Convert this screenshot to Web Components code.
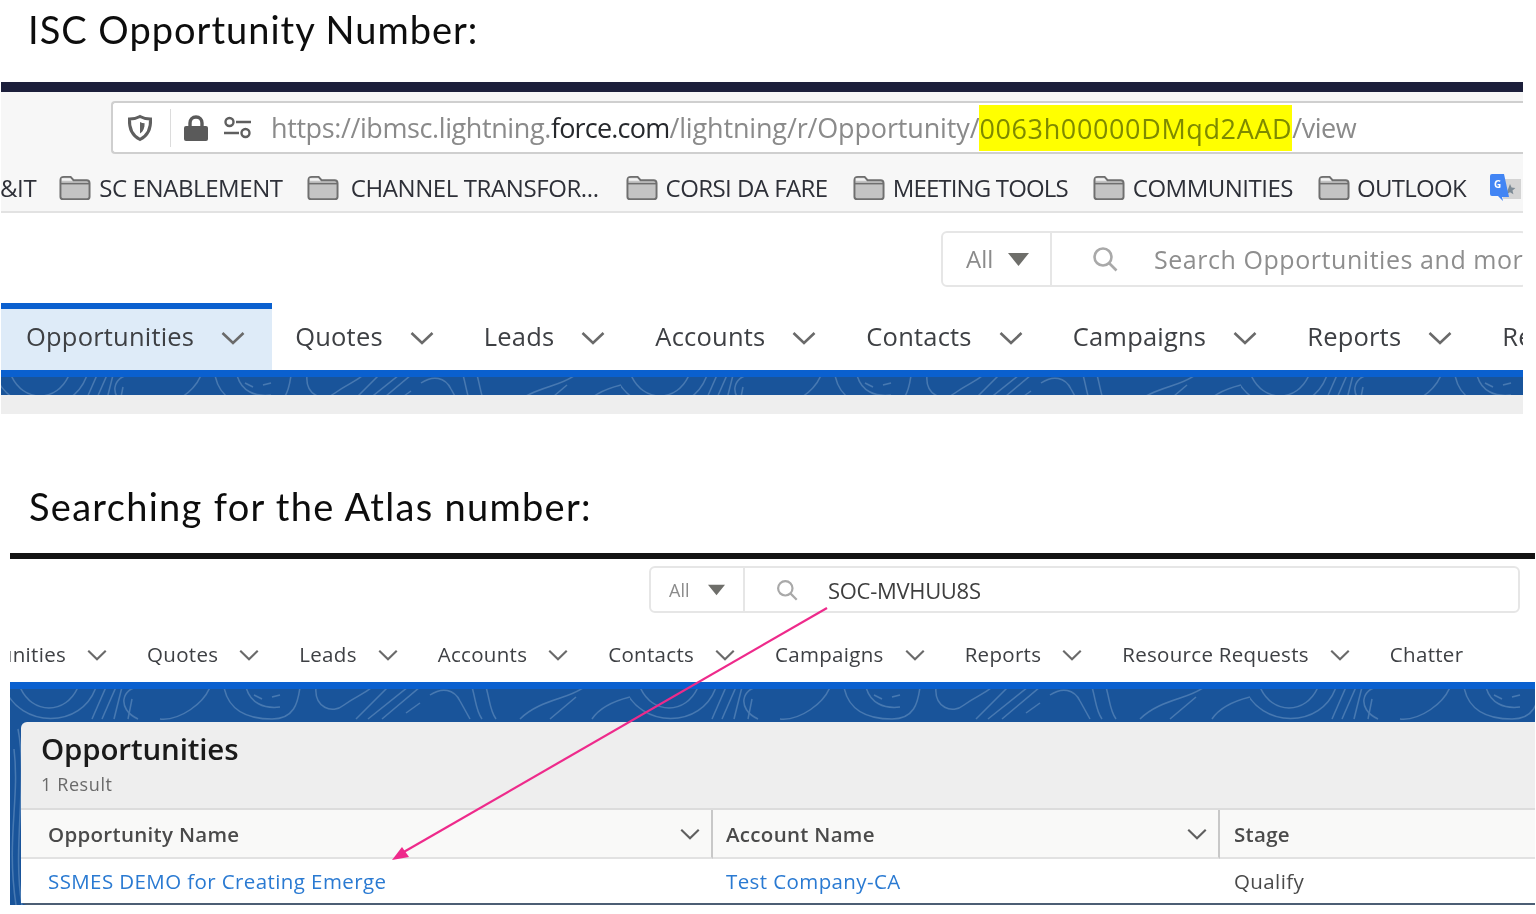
<!DOCTYPE html>
<html>
<head>
<meta charset="utf-8">
<title>ISC Opportunity Number</title>
<style>
    html, body { margin: 0; padding: 0; background: #fff; }
    body { position: relative; width: 1536px; height: 914px; overflow: hidden; font-family: "Open Sans", sans-serif; }
</style>
</head>
<body>

<slide-caption height="82" text-y="9" left="28" spacing="1">ISC Opportunity Number:</slide-caption>

<page-shot left="1" right="13">
    <browser-chrome><url-part spacing="-.4">https://ibmsc.lightning.</url-part><url-part strong spacing="-.8">force.com</url-part>/lightning/r/Opportunity/<url-part mark spacing=".63">0063h00000DMqd2AAD</url-part><url-part spacing="-.5">/view</url-part></browser-chrome>
    <search-row left="940" top="18" bottom="16" height="56" scope-width="109" size="25">Search Opportunities and mor</search-row>
    <nav-bar size="25.5" gap="27" chevron="24" space="50">
        <nav-tab active>Opportunities</nav-tab>
        <nav-tab>Quotes</nav-tab>
        <nav-tab>Leads</nav-tab>
        <nav-tab>Accounts</nav-tab>
        <nav-tab>Contacts</nav-tab>
        <nav-tab>Campaigns</nav-tab>
        <nav-tab>Reports</nav-tab>
        <nav-tab plain>Re</nav-tab>
    </nav-bar>
    <topo-band height="25"></topo-band>
    <grey-strip></grey-strip>
</page-shot>

<slide-caption height="139" text-y="72" left="29" spacing="1.3">Searching for the Atlas number:</slide-caption>

<page-shot left="10" right="1" rule>
    <search-row left="639" top="7" bottom="7" height="47" scope-width="94" size="22" typed>SOC-MVHUU8S</search-row>
    <nav-bar size="20.5" gap="21" chevron="20" space="40" offset="-101" compact>
        <nav-tab>Opportunities</nav-tab>
        <nav-tab>Quotes</nav-tab>
        <nav-tab>Leads</nav-tab>
        <nav-tab>Accounts</nav-tab>
        <nav-tab>Contacts</nav-tab>
        <nav-tab>Campaigns</nav-tab>
        <nav-tab>Reports</nav-tab>
        <nav-tab>Resource Requests</nav-tab>
        <nav-tab plain>Chatter</nav-tab>
    </nav-bar>
    <topo-band height="223">
        <results-card></results-card>
    </topo-band>
</page-shot>

<pink-arrow></pink-arrow>

<script>
function chevron(size, color) {
    return `<svg width="${size}" height="${size}" viewBox="0 0 24 24" fill="none" stroke="${color}" stroke-width="2.6">
        <path d="M1.5 7 L12 17 L22.5 7"/></svg>`;
}

function folder() {
    return `<svg width="32" height="26" viewBox="0 0 33 26">
        <path d="M1.5 5 Q1.5 1.5 5 1.5 H12 L15 5 H28.5 Q31.5 5 31.5 8 V22 Q31.5 24.5 29 24.5 H4 Q1.5 24.5 1.5 22 Z" fill="#c4c4c4" stroke="#6f6f6f" stroke-width="2"/>
        <path d="M2 8.5 H31" stroke="#6f6f6f" stroke-width="1.6"/>
        <path d="M2.6 3 H11.6 L14 5.6 H3 Z" fill="#f3f3f3"/>
    </svg>`;
}


customElements.define('slide-caption', class extends HTMLElement {
    connectedCallback() {
        const shadow = this.attachShadow({mode: 'open'});
        shadow.innerHTML = `
<style>
    :host {
        display: block;
        box-sizing: border-box;
        height: ${this.getAttribute('height')}px;
        padding: ${this.getAttribute('text-y')}px 0 0 ${this.getAttribute('left')}px;
        font: 38px/40px Lato, sans-serif;
        letter-spacing: ${this.getAttribute('spacing')}px;
        color: #0d0d0d;
        filter: blur(.4px);
    }
</style>
<slot></slot>`;
    }
});


customElements.define('page-shot', class extends HTMLElement {
    connectedCallback() {
        const shadow = this.attachShadow({mode: 'open'});
        const rule = this.hasAttribute('rule') ? 'border-top: 6px solid #141414;' : '';
        shadow.innerHTML = `
<style>
    :host {
        display: block;
        margin: 0 ${this.getAttribute('right')}px 0 ${this.getAttribute('left')}px;
        overflow: hidden;
        background: #fff;
        ${rule}
        filter: blur(.6px);
    }
</style>
<slot></slot>`;
    }
});


customElements.define('url-part', class extends HTMLElement {
    connectedCallback() {
        const shadow = this.attachShadow({mode: 'open'});
        // no white space around the tags: this host is inline, it would show as a gap in the url
        shadow.innerHTML = `<style>
    :host { letter-spacing: ${this.getAttribute('spacing') || 0}px; }
    :host([strong]) { color: #26282c; }
    :host([mark]) { background: #ffff00; color: #7e8a00; padding: 4.5px 0; }
</style><slot></slot>`;
    }
});


customElements.define('browser-chrome', class extends HTMLElement {
    connectedCallback() {
        const shadow = this.attachShadow({mode: 'open'});
        // label, gap folder-text, gap to the next folder, letter spacing
        const marks = [
            ['SC ENABLEMENT', 8, 24, -.4],
            ['CHANNEL TRANSFOR...', 12, 27, -.4],
            ['CORSI DA FARE', 8, 25, -.55],
            ['MEETING TOOLS', 8, 25, -.85],
            ['COMMUNITIES', 8, 25, -.5],
            ['OUTLOOK', 7, 23, -.7],
        ];
        shadow.innerHTML = `
<style>
    :host {
        display: block;
        background: #f7f7f7;
        border-top: 10px solid #1c1f3b;
        border-bottom: 2px solid #e2e2e2;
    }
    #address {
        display: flex;
        align-items: center;
        box-sizing: border-box;
        height: 53px;
        margin: 9px 0 0 110px;
        padding-left: 14px;
        background: #fff;
        border: 2px solid #cfcfcf;
        border-right: 0;
        border-radius: 4px 0 0 4px;
        white-space: nowrap;
        overflow: hidden;
    }
    #divider { width: 1px; height: 38px; margin: 0 12px 0 17px; background: #dcdcdc; }
    #url {
        margin: 1px 0 0 18px;
        font: 27px/32px "Open Sans", sans-serif;
        letter-spacing: -.15px;
        color: #8a8a8a;
    }
    #marks {
        display: flex;
        align-items: center;
        box-sizing: border-box;
        height: 48px;
        padding-top: 2px;
        margin-top: 9px;
        margin-left: -1px;
        white-space: nowrap;
        overflow: hidden;
        font: 24px/30px "Open Sans", sans-serif;
        letter-spacing: -.4px;
        color: #2e3038;
    }
    .mark { display: flex; align-items: center; }
    #cut { margin-right: 23px; }
</style>
<div id="address">
    <svg width="26" height="28" viewBox="0 0 26 28">
        <path d="M13 2.5 C16.5 4.5 20 5 23.5 5 C24 14 21 21.5 13 25.5 C5 21.5 2 14 2.5 5 C6 5 9.5 4.5 13 2.5 Z" fill="none" stroke="#5f5f5f" stroke-width="3"/>
        <path d="M13 8 C14.6 8.8 16 9.2 17.6 9.2 C17.8 13.5 16.4 17.4 13 19.5 Z" fill="#5f5f5f"/>
    </svg>
    <div id="divider"></div>
    <svg width="26" height="28" viewBox="0 0 26 28">
        <path d="M7 13 V9 C7 5.5 9.5 3 13 3 C16.5 3 19 5.5 19 9 V13" fill="none" stroke="#5a5a5a" stroke-width="3.4"/>
        <rect x="1" y="12" width="24" height="15" rx="2" fill="#5a5a5a"/>
    </svg>
    <svg width="30" height="24" viewBox="0 0 30 24" style="margin-left:14px">
        <circle cx="6.5" cy="6" r="4" fill="none" stroke="#5f5f5f" stroke-width="2.4"/>
        <path d="M13 6 H28" stroke="#5f5f5f" stroke-width="2.6"/>
        <circle cx="22.5" cy="17" r="4" fill="none" stroke="#5f5f5f" stroke-width="2.4"/>
        <path d="M1 17 H16" stroke="#5f5f5f" stroke-width="2.6"/>
    </svg>
    <div id="url"><slot></slot></div>
</div>
<div id="marks">
    <span id="cut">&amp;IT</span>
    ${marks.map(m => `<span class="mark" style="gap:${m[1]}px;margin-right:${m[2]}px;letter-spacing:${m[3]}px">${folder()}<span>${m[0]}</span></span>`).join('')}
    <svg width="32" height="32" viewBox="0 0 32 30" style="flex:none">
        <rect x="14" y="6" width="18" height="20" fill="#d4d4d4"/>
        <path d="M21 11 l1.6 3.6 3.8.4-2.9 2.5.9 3.8-3.4-2-3.4 2 .9-3.8z" fill="#7d8b96"/>
        <path d="M3 1 H15 L20 24 H13 L14 28 L9 23 H3 Q1 23 1 21 V3 Q1 1 3 1 Z" fill="#4285f4"/>
        <text x="5" y="15" font-family="Open Sans" font-size="10" font-weight="700" fill="#fff">G</text>
    </svg>
</div>`;
    }
});


customElements.define('search-row', class extends HTMLElement {
    connectedCallback() {
        const shadow = this.attachShadow({mode: 'open'});
        const size = +this.getAttribute('size');
        const typed = this.hasAttribute('typed');
        shadow.innerHTML = `
<style>
    :host {
        display: block;
        padding: ${this.getAttribute('top')}px 0 ${this.getAttribute('bottom')}px ${this.getAttribute('left')}px;
        background: #fff;
        font: ${size}px/1 "Open Sans", sans-serif;
    }
    #box {
        display: flex;
        align-items: center;
        box-sizing: border-box;
        height: ${this.getAttribute('height')}px;
        margin-right: ${typed ? 15 : -4}px;
        border: 2px solid #e6e6e6;
        border-radius: 6px;
        white-space: nowrap;
        overflow: hidden;
    }
    #scope {
        display: flex;
        align-items: center;
        gap: ${typed ? 19 : 15}px;
        box-sizing: border-box;
        flex: none;
        width: ${this.getAttribute('scope-width')}px;
        height: 100%;
        padding-left: ${typed ? 18 : 23}px;
        color: #8b8b8b;
        font-size: ${typed ? 18 : 24}px;
        border-right: 2px solid #e6e6e6;
    }
    #query {
        margin-left: ${typed ? 31 : 40}px;
        margin-right: ${typed ? 30 : 36}px;
        flex: none;
        display: flex;
    }
    #text { color: ${typed ? '#3e3e3e' : '#8e8e8e'}; letter-spacing: ${typed ? '-.3px' : '.55px'}; }
</style>
<div id="box">
    <div id="scope">All
        <svg width="${typed ? 17 : 21}" height="${typed ? 12 : 13}" viewBox="0 0 21 13"><path d="M0 0 H21 L10.5 13 Z" fill="#6e6e6a"/></svg>
    </div>
    <svg id="query" width="${typed ? 22 : 26}" height="${typed ? 22 : 26}" viewBox="0 0 26 26" fill="none" stroke="#a9a9a9" stroke-width="2.6">
        <circle cx="11" cy="11" r="8.5"/>
        <path d="M17 17 L24.5 24.5"/>
    </svg>
    <div id="text"><slot></slot></div>
</div>`;
    }
});


customElements.define('nav-bar', class extends HTMLElement {
    connectedCallback() {
        const shadow = this.attachShadow({mode: 'open'});
        const compact = this.hasAttribute('compact');
        shadow.innerHTML = `
<style>
    :host {
        display: flex;
        box-sizing: border-box;
        height: ${compact ? 62 : 67}px;
        padding-top: ${compact ? 6 : 0}px;
        margin-left: ${this.getAttribute('offset') || 0}px;
        white-space: nowrap;
        background: #fff;
        color: #3e4044;
        font: ${this.getAttribute('size')}px/1 "Open Sans", sans-serif;
        letter-spacing: ${compact ? .3 : .2}px;
        --tab-gap: ${this.getAttribute('gap')}px;
        --tab-chevron: ${this.getAttribute('chevron')}px;
        --tab-space: ${+this.getAttribute('space') / 2}px;
    }
</style>
<slot></slot>`;
    }
});


customElements.define('nav-tab', class extends HTMLElement {
    connectedCallback() {
        const shadow = this.attachShadow({mode: 'open'});
        const size = parseInt(getComputedStyle(this).getPropertyValue('--tab-chevron'));
        shadow.innerHTML = `
<style>
    :host {
        display: flex;
        align-items: center;
        gap: var(--tab-gap);
        box-sizing: border-box;
        flex: none;
        padding: 0 var(--tab-space);
    }
    :host([active]) {
        padding: 0 27px 0 25px;
        margin-right: -2px;
        background: #deebf8;
        box-shadow: inset 0 6px #0a60cf;
    }
    svg { flex: none; margin-top: 2px; }
</style>
<span><slot></slot></span>
${this.hasAttribute('plain') ? '' : chevron(size, '#6a6a6a')}`;
    }
});


customElements.define('topo-band', class extends HTMLElement {
    connectedCallback() {
        const shadow = this.attachShadow({mode: 'open'});
        shadow.innerHTML = `
<style>
    :host {
        display: grid;
        box-sizing: border-box;
        height: ${this.getAttribute('height')}px;
        overflow: hidden;
        background: #19549a;
        border-top: 7px solid #0a60cf;
    }
    svg, #content { grid-area: 1 / 1; min-width: 0; }
    svg { width: 100%; height: 100%; }
    #content { display: flex; flex-direction: column; }
</style>
<svg preserveAspectRatio="none" aria-hidden="true">
    <defs>
        <pattern id="topo" width="620" height="216" patternUnits="userSpaceOnUse">
            <g fill="none" stroke="#6d96c4" stroke-width="1.5" opacity=".55">
                <path d="M10 -2 C22 26 56 26 68 -2"/>
                <path d="M-6 -2 C10 40 72 40 86 -2"/>
                <path d="M82 30 L96 -2 M92 30 L106 -2 M104 30 L112 -2 M118 30 L122 10"/>
                <path d="M128 30 C106 20 112 -2 130 -2"/>
                <path d="M150 30 C170 32 194 14 200 -2"/>
                <path d="M214 -2 C218 20 236 30 262 30 C284 30 288 14 290 -2"/>
                <path d="M236 -2 C240 14 254 20 270 18 M244 6 L252 10 M262 8 L270 6"/>
                <path d="M306 -2 C304 18 322 26 334 16 C348 6 356 4 362 -2"/>
                <path d="M346 30 L378 -2 M358 30 L398 -2 M372 30 L410 -2"/>
                <path d="M396 24 L410 14 M420 6 C432 -2 444 0 450 12 L460 30"/>
                <path d="M462 -2 C466 12 466 22 472 30 M476 -2 C480 12 480 22 486 30"/>
                <path d="M510 30 C530 10 560 10 574 -2 M540 30 L566 8 M582 30 C590 18 604 12 620 8"/>
                <path d="M4 60 C10 110 -4 150 6 216 M8 40 C18 90 2 160 12 216"/>
            </g>
        </pattern>
    </defs>
    <rect width="100%" height="100%" fill="url(#topo)"/>
</svg>
<div id="content"><slot></slot></div>`;
    }
});


customElements.define('grey-strip', class extends HTMLElement {
    connectedCallback() {
        const shadow = this.attachShadow({mode: 'open'});
        shadow.innerHTML = `
<style>
    :host { display: block; height: 19px; background: #eeeeee; }
</style>`;
    }
});


customElements.define('results-card', class extends HTMLElement {
    connectedCallback() {
        const shadow = this.attachShadow({mode: 'open'});
        const columns = [
            ['Opportunity Name', true, 'SSMES DEMO for Creating Emerge', true],
            ['Account Name', true, 'Test Company-CA', true],
            ['Stage', false, 'Qualify', false],
        ];
        shadow.innerHTML = `
<style>
    :host {
        display: block;
        margin: 33px 0 0 11px;
        background: #eee;
        border-radius: 6px 0 0 6px;
        border-bottom: 2px solid #4c5e74;
        font-family: "Open Sans", sans-serif;
        color: #4a4a4a;
    }
    #head { box-sizing: border-box; height: 88px; padding: 9px 0 0 20px; border-bottom: 2px solid #dcdcdc; }
    h2 { margin: 0; font: 600 29.5px/36px "Open Sans", sans-serif; letter-spacing: -.15px; color: #1a1a1a; }
    p { margin: 6px 0 0; font: 18px/22px "Open Sans", sans-serif; letter-spacing: .6px; color: #6a6a6a; }
    #table {
        display: grid;
        grid-template-columns: 692px 507px 1fr;
        grid-template-rows: 49px 44px;
    }
    .th {
        display: flex;
        align-items: center;
        justify-content: space-between;
        padding: 0 11px 0 27px;
        background: #f9f9f8;
        border-bottom: 2px solid #e2e2e2;
        font-weight: 600;
        font-size: 20.5px;
        letter-spacing: .3px;
    }
    .th.sep { border-right: 2px solid #c8c8c8; }
    .th:nth-child(2) { padding-left: 13px; }
    .th:nth-child(3) { padding-left: 14px; }
    .td {
        display: flex;
        align-items: center;
        padding-left: 27px;
        background: #fff;
        font-size: 20.5px;
        letter-spacing: .4px;
        white-space: nowrap;
    }
    .td:nth-child(5) { padding-left: 13px; }
    .td:nth-child(6) { padding-left: 14px; }
    .link { color: #2a7ad2; }
</style>
<div id="head">
    <h2>Opportunities</h2>
    <p>1 Result</p>
</div>
<div id="table">
    ${columns.map(c => `<div class="th ${c[1] ? 'sep' : ''}"><span>${c[0]}</span>${c[1] ? chevron(20, '#5f5f5f') : ''}</div>`).join('')}
    ${columns.map(c => `<div class="td ${c[3] ? 'link' : ''}">${c[2]}</div>`).join('')}
</div>`;
    }
});


customElements.define('pink-arrow', class extends HTMLElement {
    connectedCallback() {
        const shadow = this.attachShadow({mode: 'open'});
        shadow.innerHTML = `
<style>
    :host { position: absolute; left: 0; top: 0; width: 1536px; height: 914px; pointer-events: none; }
    svg { display: block; filter: blur(.3px); }
</style>
<svg width="1536" height="914" viewBox="0 0 1536 914">
    <path d="M827 608 L402 853" stroke="#ee2a8b" stroke-width="2.2" fill="none"/>
    <path d="M392 860 L402 847 L409 857 Z" fill="#ee2a8b"/>
</svg>`;
    }
});
</script>
</body>
</html>
